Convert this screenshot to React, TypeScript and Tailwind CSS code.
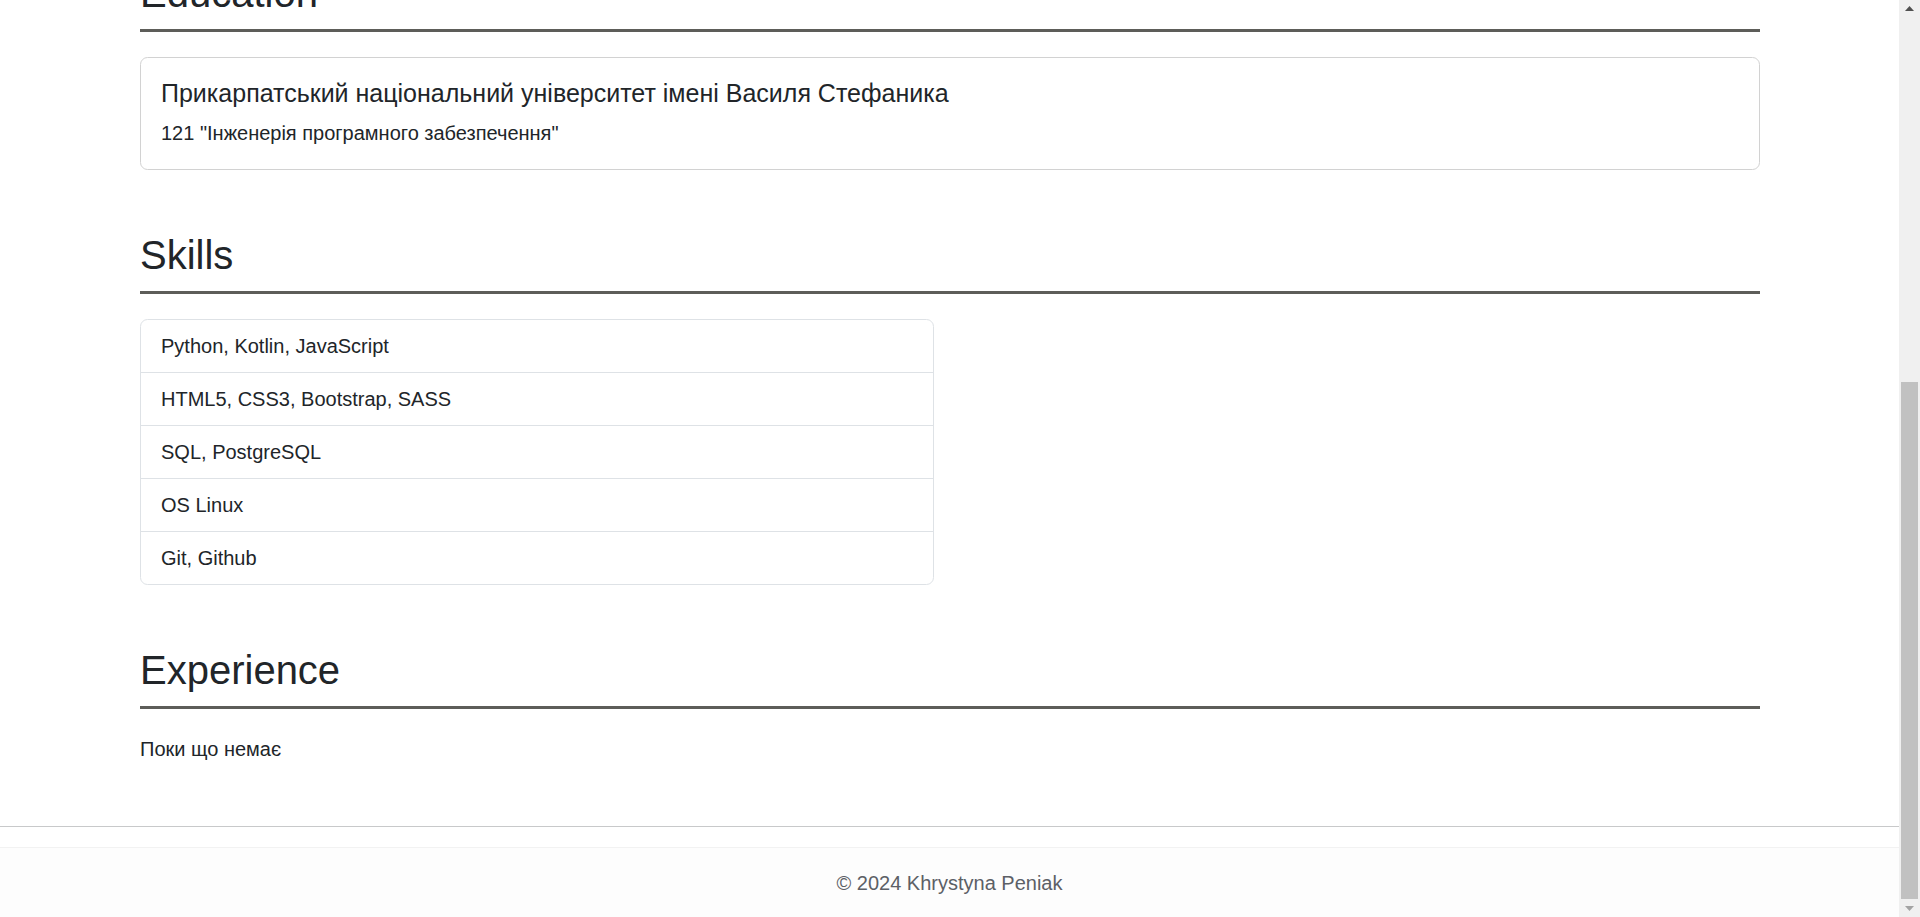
import React from 'react';

const skills = [
  'Python, Kotlin, JavaScript',
  'HTML5, CSS3, Bootstrap, SASS',
  'SQL, PostgreSQL',
  'OS Linux',
  'Git, Github',
];

function Section({ title, children }: { title: string; children: React.ReactNode }) {
  return (
    <section>
      <h2 className="mb-[25px] border-b-[3px] border-[#5d5d59] pt-[2px] pb-[12px] text-[40px] leading-[48px] font-normal">
        {title}
      </h2>
      {children}
    </section>
  );
}

function Scrollbar() {
  return (
    <div className="flex w-[21px] shrink-0 flex-col bg-[#f0f0f0]">
      {/* up arrow */}
      <div className="flex h-[17px] shrink-0 items-center justify-center">
        <svg width="9" height="5" viewBox="0 0 9 5">
          <polygon points="4.5,0 9,5 0,5" fill="#505050" />
        </svg>
      </div>
      <div className="flex flex-1 flex-col px-[2px] pt-[365px] pb-[1px]">
        <div className="h-[517px] bg-[#c1c1c1]" />
      </div>
      {/* down arrow */}
      <div className="flex h-[17px] shrink-0 items-center justify-center">
        <svg width="9" height="5" viewBox="0 0 9 5">
          <polygon points="0,0 9,0 4.5,5" fill="#a3a3a3" />
        </svg>
      </div>
    </div>
  );
}

export default function App() {
  return (
    <div className="flex h-[917px] overflow-hidden bg-white font-['Liberation_Sans',Arial,sans-serif] text-[#212529]">
      <div className="flex min-w-0 flex-1 flex-col">
        <main className="-mt-[33px] ml-[140px] flex w-[1620px] shrink-0 flex-col gap-[59px]">
          {/* Education */}
          <Section title="Education">
            <div className="rounded-[7.5px] border border-[#d2d2d2] px-[20px] pt-[20px] pb-[21px]">
              <h5 className="mb-[10px] text-[25px] leading-[30px] font-normal">
                Прикарпатський національний університет імені Василя Стефаника
              </h5>
              <p className="text-[20px] leading-[30px]">121 "Інженерія програмного забезпечення"</p>
            </div>
          </Section>

          {/* Skills */}
          <Section title="Skills">
            <ul className="w-[794px] divide-y divide-[#dee2e6] rounded-[7.5px] border border-[#dee2e6]">
              {skills.map((s) => (
                <li key={s} className="px-[20px] py-[11px] text-[20px] leading-[30px]">
                  {s}
                </li>
              ))}
            </ul>
          </Section>

          {/* Experience */}
          <Section title="Experience">
            <p className="text-[20px] leading-[30px]">Поки що немає</p>
          </Section>
        </main>

        <div className="mt-[62px] h-px shrink-0 bg-[#c8c9ca]" />

        {/* Footer */}
        <footer className="mt-[20px] shrink-0 border-t border-[#f2f2f2] bg-[#fdfdfd] py-[20px] text-center text-[20px] leading-[30px] text-[#5c6066]">
          © 2024 Khrystyna Peniak
        </footer>
      </div>
      <Scrollbar />
    </div>
  );
}
